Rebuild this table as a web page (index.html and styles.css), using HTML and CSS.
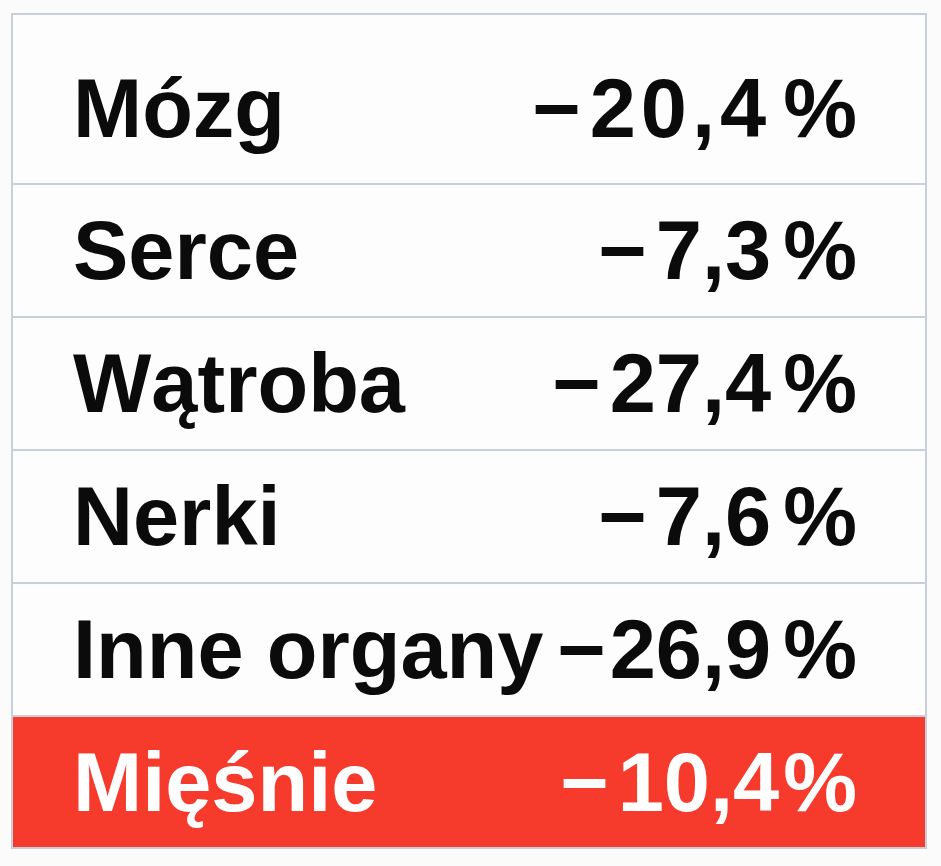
FILE: index.html
```html
<!DOCTYPE html>
<html lang="pl">
<head>
<meta charset="utf-8">
<title>Organy</title>
<link rel="stylesheet" href="styles.css">
</head>
<body>
<div class="table">
  <div class="row first"><span class="name">Mózg</span><span class="val"><span class="sign">−</span><span class="num wide">20,4</span><span class="pct">%</span></span></div>
  <div class="row"><span class="name">Serce</span><span class="val"><span class="sign">−</span><span class="num">7,3</span><span class="pct">%</span></span></div>
  <div class="row"><span class="name">Wątroba</span><span class="val"><span class="sign">−</span><span class="num">27,4</span><span class="pct">%</span></span></div>
  <div class="row"><span class="name">Nerki</span><span class="val"><span class="sign">−</span><span class="num">7,6</span><span class="pct">%</span></span></div>
  <div class="row"><span class="name">Inne organy</span><span class="val"><span class="sign tight">−</span><span class="num">26,9</span><span class="pct">%</span></span></div>
  <div class="row hl"><span class="name">Mięśnie</span><span class="val"><span class="sign">−</span><span class="num">10,4</span><span class="pct close">%</span></span></div>
</div>
</body>
</html>
```

FILE: styles.css
```css
* { box-sizing: border-box; }
html, body { margin: 0; padding: 0; background: #fbfbfc; }
body {
  font-family: "Liberation Sans", Arial, sans-serif;
  font-weight: 700;
  color: #0b0b0b;
}
.table {
  margin: 13px 0 0 11px;
  width: 916px;
  border: 2px solid #c9cfd9;
  background: #fdfdfe;
}
.row {
  display: flex;
  justify-content: space-between;
  align-items: center;
  gap: 6px;
  height: 133px;
  padding: 0 68px 0 60px;
  border-bottom: 2px solid #c9cfd9;
  font-size: 83px;
  line-height: 1;
}
.row.first {
  height: 170px;
  padding-top: 18px;
}
.row.hl {
  height: 130px;
  border-bottom: none;
  background: #f63b2d;
  color: #ffffff;
}
.name, .val { white-space: nowrap; }
.val { display: flex; align-items: baseline; }
.sign { margin-right: 9px; }
.sign.tight { margin-right: 4px; }
.num.wide { letter-spacing: 5px; }
.pct { margin-left: 12px; }
.pct.close { margin-left: 4px; }
```
